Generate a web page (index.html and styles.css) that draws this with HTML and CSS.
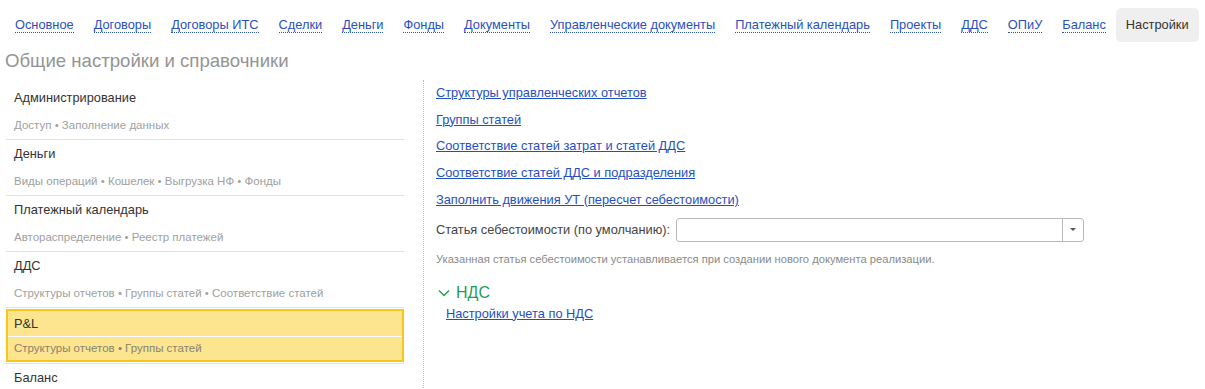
FILE: index.html
```html
<!DOCTYPE html>
<html lang="ru">
<head>
    <meta charset="UTF-8">
    <title>Настройки</title>
    <link rel="stylesheet" href="styles.css">
</head>
<body>
    <nav class="tabs">
        <a class="tab" href="#"><span>Основное</span></a>
        <a class="tab" href="#"><span>Договоры</span></a>
        <a class="tab" href="#"><span>Договоры ИТС</span></a>
        <a class="tab" href="#"><span>Сделки</span></a>
        <a class="tab" href="#"><span>Деньги</span></a>
        <a class="tab" href="#"><span>Фонды</span></a>
        <a class="tab" href="#"><span>Документы</span></a>
        <a class="tab" href="#"><span>Управленческие документы</span></a>
        <a class="tab" href="#"><span>Платежный календарь</span></a>
        <a class="tab" href="#"><span>Проекты</span></a>
        <a class="tab" href="#"><span>ДДС</span></a>
        <a class="tab" href="#"><span>ОПиУ</span></a>
        <a class="tab" href="#"><span>Баланс</span></a>
        <a class="tab active" href="#"><span>Настройки</span></a>
    </nav>

    <h1 class="page-title">Общие настройки и справочники</h1>

    <div class="columns">
        <div class="sections">
            <div class="item">
                <div class="item-box">
                    <div class="item-title">Администрирование</div>
                    <div class="item-sub">Доступ • Заполнение данных</div>
                </div>
            </div>
            <div class="item">
                <div class="item-box">
                    <div class="item-title">Деньги</div>
                    <div class="item-sub">Виды операций • Кошелек • Выгрузка НФ • Фонды</div>
                </div>
            </div>
            <div class="item">
                <div class="item-box">
                    <div class="item-title">Платежный календарь</div>
                    <div class="item-sub">Автораспределение • Реестр платежей</div>
                </div>
            </div>
            <div class="item">
                <div class="item-box">
                    <div class="item-title">ДДС</div>
                    <div class="item-sub">Структуры отчетов • Группы статей • Соответствие статей</div>
                </div>
            </div>
            <div class="item active">
                <div class="item-box">
                    <div class="item-title">P&amp;L</div>
                    <div class="item-sub">Структуры отчетов • Группы статей</div>
                </div>
            </div>
            <div class="item">
                <div class="item-box">
                    <div class="item-title">Баланс</div>
                </div>
            </div>
        </div>

        <div class="divider"></div>

        <div class="details">
            <div class="links">
                <a href="#">Структуры управленческих отчетов</a>
                <a href="#">Группы статей</a>
                <a href="#">Соответствие статей затрат и статей ДДС</a>
                <a href="#">Соответствие статей ДДС и подразделения</a>
                <a href="#">Заполнить движения УТ (пересчет себестоимости)</a>
            </div>

            <div class="field">
                <label class="field-label">Статья себестоимости (по умолчанию):</label>
                <div class="select">
                    <input type="text">
                    <span class="select-btn"><span class="arrow"></span></span>
                </div>
            </div>
            <div class="hint">Указанная статья себестоимости устанавливается при создании нового документа реализации.</div>

            <div class="group">
                <div class="group-head">
                    <svg width="12" height="8" viewBox="0 0 12 8"><path d="M1 1.5 L6 6.5 L11 1.5" fill="none" stroke="#1f9d55" stroke-width="1.4"/></svg>
                    <span>НДС</span>
                </div>
                <a class="group-link" href="#">Настройки учета по НДС</a>
            </div>
        </div>
    </div>
</body>
</html>
```

FILE: styles.css
```css
html, body {
    margin: 0;
    padding: 0;
    background: #fff;
    font-family: 'Liberation Sans', Arial, sans-serif;
    font-size: 12.8px;
    color: #333;
    overflow: hidden;
}
/* верхние закладки */
.tabs {
    display: flex;
    margin-top: 8px;
    padding-left: 5px;
    white-space: nowrap;
}
.tab {
    display: flex;
    flex-shrink: 0;
    align-items: center;
    height: 34px;
    padding: 0 10px;
    text-decoration: none;
    color: #2a50c0;
    border-radius: 5px;
}
.tab span {
    line-height: 15px;
    border-bottom: 1px dotted #2a50c0;
}
.tab.active {
    background: #efefef;
    color: #333;
}
.tab.active span {
    border-bottom-color: transparent;
}
.page-title {
    margin: 8px 0 0 5px;
    font-size: 18.6px;
    line-height: 22px;
    font-weight: normal;
    color: #949494;
}
.columns {
    display: flex;
    margin-top: 8px;
    padding-left: 6px;
}
/* список разделов */
.sections {
    width: 398px;
    padding-top: 4px;
}
.item {
    border-bottom: 1px solid #e3e3e3;
}
.item-title {
    height: 27px;
    line-height: 27px;
    padding-left: 8px;
    border-bottom: 1px solid #fff;
    color: #333;
}
.item-sub {
    height: 27px;
    line-height: 27px;
    padding-left: 8px;
    font-size: 11.5px;
    color: #a0a0a0;
}
.item.active {
    padding: 1px 0;
}
.item.active .item-box {
    background: #fde58f;
    border: 2px solid #f8c71c;
}
.item.active .item-title {
    height: 25px;
    line-height: 25px;
    padding-left: 6px;
}
.item.active .item-sub {
    height: 23px;
    line-height: 23px;
    padding-left: 6px;
    color: #8a8270;
}
.divider {
    margin-left: 19px;
    border-left: 1px dotted #bdbdbd;
    height: 320px;
}
/* правая часть */
.details {
    padding-left: 12px;
}
.links {
    display: flex;
    flex-direction: column;
    align-items: flex-start;
}
.links a, .group-link {
    line-height: 26.7px;
    color: #1f4fc4;
    text-decoration: underline;
}
.field {
    display: flex;
    align-items: center;
    margin-top: 4px;
}
.field-label {
    color: #444;
    margin-right: 6px;
}
.select {
    display: flex;
    width: 406px;
    height: 22px;
    border: 1px solid #b9b9b9;
    border-radius: 3px;
}
.select input {
    flex: 1;
    border: none;
    outline: none;
    padding: 0 4px;
    font: inherit;
    background: transparent;
}
.select-btn {
    width: 20px;
    border-left: 1px solid #b9b9b9;
    display: flex;
    align-items: center;
    justify-content: center;
}
.arrow {
    width: 0;
    height: 0;
    border-left: 3px solid transparent;
    border-right: 3px solid transparent;
    border-top: 3px solid #555;
}
.hint {
    margin-top: 10px;
    font-size: 11.2px;
    line-height: 14px;
    color: #8a8a8a;
}
.group {
    margin-top: 17px;
}
.group-head {
    display: flex;
    align-items: center;
    gap: 6px;
    padding-left: 2px;
    font-size: 16px;
    line-height: 20px;
    color: #1f9d55;
}
.group-link {
    display: inline-block;
    margin-left: 10px;
    line-height: 22px;
}
```
